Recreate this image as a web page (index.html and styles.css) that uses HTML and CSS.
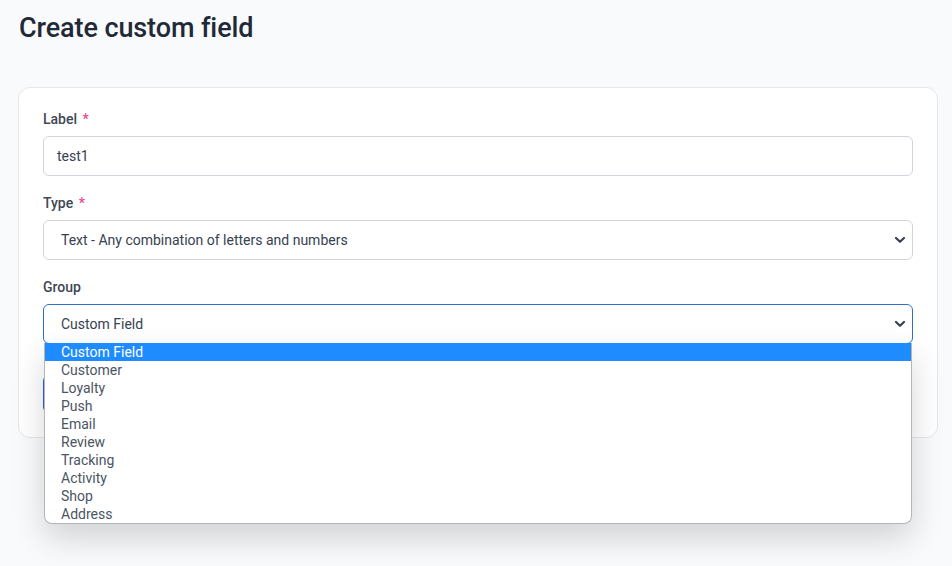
FILE: index.html
```html
<!DOCTYPE html>
<html>
<head>
<meta charset="utf-8">
<link rel="stylesheet" href="styles.css">
</head>
<body>
<h1 class="title">Create custom field</h1>
<div class="card">
  <div class="field">
    <label class="label">Label <span class="req">*</span></label>
    <div class="input">test1</div>
  </div>
  <div class="field">
    <label class="label">Type <span class="req">*</span></label>
    <div class="select">
      <span>Text - Any combination of letters and numbers</span>
      <svg class="chev" width="12" height="8" viewBox="0 0 12 8"><path d="M2 2 L6 5.8 L10 2" fill="none" stroke="#374151" stroke-width="2.2" stroke-linecap="round" stroke-linejoin="round"/></svg>
    </div>
  </div>
  <div class="field">
    <label class="label">Group</label>
    <div class="select-wrap">
      <div class="select focus">
        <span>Custom Field</span>
        <svg class="chev" width="12" height="8" viewBox="0 0 12 8"><path d="M2 2 L6 5.8 L10 2" fill="none" stroke="#374151" stroke-width="2.2" stroke-linecap="round" stroke-linejoin="round"/></svg>
      </div>
      <ul class="dropdown">
        <li class="active">Custom Field</li>
        <li>Customer</li>
        <li>Loyalty</li>
        <li>Push</li>
        <li>Email</li>
        <li>Review</li>
        <li>Tracking</li>
        <li>Activity</li>
        <li>Shop</li>
        <li>Address</li>
      </ul>
    </div>
  </div>
  <div class="actions">
    <button class="btn" aria-label="Create"></button>
  </div>
</div>
</body>
</html>
```
FILE: styles.css
```css
html, body {
  margin: 0;
  padding: 0;
}
body {
  background: #f9fafb;
  font-family: Roboto, "Liberation Sans", sans-serif;
  color: #374151;
  height: 566px;
  overflow: hidden;
}
.title {
  margin: 0;
  padding: 12px 19px 0;
  font-size: 27px;
  line-height: 32px;
  font-weight: 500;
  color: #1f2937;
  letter-spacing: -0.1px;
}
.card {
  margin: 43px 14px 0 18px;
  background: #fff;
  border: 1px solid #e5e7eb;
  border-radius: 12px;
  padding: 21px 24px 24px;
}
.field {
  display: flex;
  flex-direction: column;
  gap: 7px;
  margin-bottom: 17px;
}
.label {
  font-size: 14px;
  line-height: 20px;
  font-weight: 500;
  color: #3f4754;
}
.req {
  color: #ec4899;
  margin-left: 2px;
}
.input, .select {
  height: 40px;
  box-sizing: border-box;
  border: 1px solid #d1d5db;
  border-radius: 6px;
  font-size: 14px;
  color: #374151;
  display: flex;
  align-items: center;
  background: #fff;
}
.input {
  padding: 0 13px;
}
.select {
  padding: 0 6px 0 17px;
  justify-content: space-between;
}
.select.focus {
  border-color: #2f6fd0;
}
.select-wrap {
  position: relative;
}
.dropdown {
  position: absolute;
  top: 39px;
  left: 1px;
  box-sizing: border-box;
  width: 868px;
  margin: 0;
  padding: 0;
  list-style: none;
  background: #fff;
  border: 1px solid #b5b5b5;
  border-top: none;
  border-radius: 0 0 8px 8px;
  box-shadow: 0 14px 32px rgba(0, 0, 0, 0.16);
  z-index: 10;
}
.dropdown li {
  height: 18px;
  line-height: 18px;
  font-size: 14px;
  padding-left: 16px;
  color: #4b5563;
}
.dropdown li.active {
  background: #1e8cff;
  color: #fff;
}
.actions {
  padding-top: 14px;
}
.btn {
  display: block;
  width: 110px;
  height: 38px;
  padding: 0;
  border: none;
  border-radius: 6px;
  background: #2563eb;
}
```
